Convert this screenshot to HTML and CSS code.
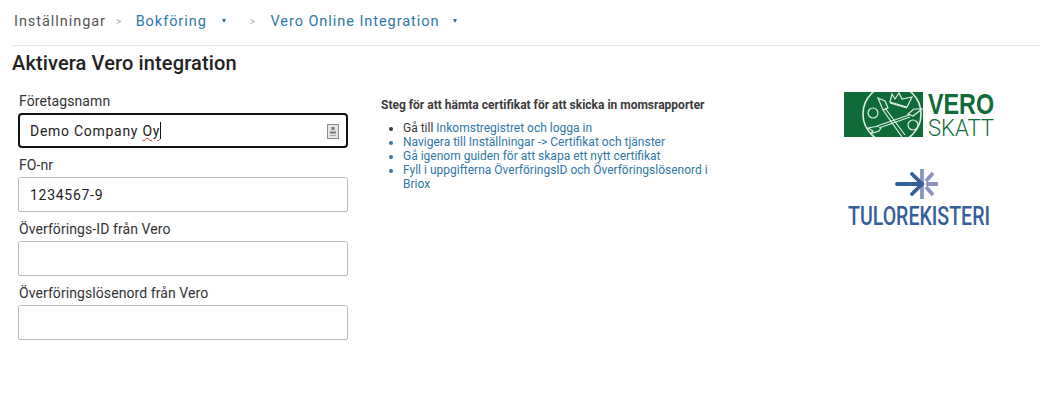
FILE: index.html
```html
<!DOCTYPE html>
<html lang="sv">
<head>
<meta charset="utf-8">
<title>Aktivera Vero integration</title>
<link rel="stylesheet" href="styles.css">
</head>
<body>
<nav class="crumbs">
  <span class="crumb-root">Inställningar</span>
  <span class="sep sep-first">&gt;</span>
  <a class="crumb-link">Bokföring</a>
  <span class="caret caret-first"></span>
  <span class="sep sep-second">&gt;</span>
  <a class="crumb-link">Vero Online Integration</a>
  <span class="caret caret-second"></span>
</nav>
<main class="content">
  <h1 class="title">Aktivera Vero integration</h1>
  <div class="columns">
    <form class="form">
      <div class="field">
        <label class="label">Företagsnamn</label>
        <div class="input input-focus">
          <span class="value">Demo Company <span class="squiggle">Oy</span></span><span class="cursor"></span>
          <svg class="autofill" width="12" height="15" viewBox="0 0 12 15"><rect x="0.5" y="0.5" width="11" height="14" fill="#e4e4e4" stroke="#8d8d8d"/><rect x="4.500" y="3" width="3" height="3" fill="#777"/><path d="M3 7.500h6v2H3z" fill="#777"/><path d="M3 11.500h6" stroke="#aaa"/></svg>
        </div>
      </div>
      <div class="field">
        <label class="label">FO-nr</label>
        <div class="input"><span class="value">1234567-9</span></div>
      </div>
      <div class="field">
        <label class="label">Överförings-ID från Vero</label>
        <div class="input"></div>
      </div>
      <div class="field">
        <label class="label">Överföringslösenord från Vero</label>
        <div class="input"></div>
      </div>
    </form>
    <section class="steps">
      <h2 class="steps-title">Steg för att hämta certifikat för att skicka in momsrapporter</h2>
      <ul class="steps-list">
        <li class="step-dark">Gå till <a class="step-link">Inkomstregistret och logga in</a></li>
        <li><a class="step-link">Navigera till Inställningar -&gt; Certifikat och tjänster</a></li>
        <li><a class="step-link">Gå igenom guiden för att skapa ett nytt certifikat</a></li>
        <li><a class="step-link">Fyll i uppgifterna ÖverföringsID och Överföringslösenord i Briox</a></li>
      </ul>
    </section>
    <aside class="logos">
      <svg class="logo-vero" width="174" height="60" viewBox="0 -8 174 60">
        <defs><clipPath id="vero-clip"><rect x="0" y="1" width="79" height="45"/></clipPath></defs>
        <rect x="0" y="1" width="79" height="45" fill="#0f6b38"/>
        <g clip-path="url(#vero-clip)" fill="none" stroke="#dfeee5" stroke-width="1.200">
          <circle cx="48" cy="23" r="29" stroke-width="1.600"/>
          <path d="M34 7l7 3 3 7-5 2zM41 17l20 27M39 19l19 27"/>
          <path d="M78 18l-8 0-6 5 5 2zM65 24L33 35M66 26L35 37"/>
          <path d="M35 35l-11 2 5 3-3 3 9-3 2-3"/>
          <circle cx="29" cy="22" r="5"/>
          <circle cx="69" cy="34" r="5"/>
          <path d="M48 3l3 5 4-6 3 6 10-2-5 10-17-5z"/>
          <path d="M46 12l17 5"/>
        </g>
        <text class="vero-big" x="84" y="23" textLength="66" lengthAdjust="spacingAndGlyphs">VERO</text>
        <text class="vero-small" x="84" y="45" textLength="66" lengthAdjust="spacingAndGlyphs">SKATT</text>
      </svg>
      <svg class="logo-tulo" width="190" height="62" viewBox="0 0 190 62">
        <g fill="none" stroke-width="3.800">
          <path d="M76 1v30M80 16h12M87 5l-7 8M87 27l-7-8" stroke="#8c95c0"/>
          <path d="M51 16h25M66 6l10 10-10 10" stroke="#34609a" stroke-linecap="round"/>
        </g>
        <text class="tulo-text" x="2" y="57" textLength="142" lengthAdjust="spacingAndGlyphs">TULOREKISTERI</text>
      </svg>
    </aside>
  </div>
</main>
</body>
</html>
```

FILE: styles.css
```css
* { box-sizing: border-box; }
html, body { margin: 0; padding: 0; }
body {
  width: 1040px;
  height: 406px;
  overflow: hidden;
  background: #fff;
  font-family: Roboto, "Liberation Sans", sans-serif;
  color: #222;
}
.crumbs {
  display: flex;
  align-items: center;
  height: 46px;
  margin-left: 12px;
  padding: 0 0 3px 2px;
  border-bottom: 1px solid #e2e2e2;
  font-size: 14.500px;
  letter-spacing: 0.95px;
}
.crumb-root { color: #555; }
.crumb-link { color: #2f78a8; }
.sep { color: #aaa; font-size: 10px; }
.sep-first { margin: 0 13.500px 0 10px; }
.sep-second { margin: 0 14.500px 0 0; }
.caret {
  width: 0;
  height: 0;
  border-left: 2.500px solid transparent;
  border-right: 2.500px solid transparent;
  border-top: 4px solid #2f6f9e;
}
.caret-first { margin: 0 24px 0 15px; }
.caret-second { margin-left: 14px; }
.content { padding-left: 12px; }
.title {
  margin: 5px 0 0;
  font-size: 20px;
  line-height: 24px;
  font-weight: 500;
  letter-spacing: 0.13px;
  color: #222;
}
.columns { display: flex; align-items: flex-start; }
.form { width: 336px; margin-top: 16px; padding-left: 6px; }
.field { margin-bottom: 7px; }
.label {
  display: block;
  height: 22px;
  padding-left: 1px;
  font-size: 14px;
  line-height: 20px;
  letter-spacing: 0.08px;
  color: #333;
}
.input {
  display: flex;
  align-items: center;
  width: 330px;
  height: 35px;
  padding-left: 11px;
  border: 1px solid #bdbdbd;
  border-radius: 2px;
  font-size: 14px;
  letter-spacing: 0.72px;
  color: #222;
}
.input-focus {
  position: relative;
  border: 2px solid #111;
  border-radius: 4px;
  padding-left: 10px;
}
.squiggle {
  text-decoration: underline wavy #d22;
  text-decoration-thickness: 1px;
  text-underline-offset: 1px;
}
.cursor { width: 1px; height: 17px; background: #111; }
.autofill { position: absolute; right: 7px; top: 9px; }
.steps { width: 334px; margin: 23px 0 0 33px; color: #3a3a3a; }
.steps-title {
  margin: 0;
  font-size: 12px;
  line-height: 14px;
  font-weight: 700;
  color: #3a3a3a;
}
.steps-list {
  margin: 9px 0 0;
  padding-left: 22px;
  font-size: 12px;
  line-height: 14px;
  color: #2f78a8;
}
.step-dark { color: #3a3a3a; }
.step-link { color: #2f78a8; }
.logos {
  display: flex;
  flex-direction: column;
  align-items: flex-start;
  margin: 8px 0 0 129px;
}
.logo-vero { display: block; }
.logo-tulo { display: block; margin: 25px 0 0 2px; }
.vero-big {
  font-family: "Liberation Sans", sans-serif;
  font-size: 30px;
  font-weight: 700;
  fill: #0f6b38;
}
.vero-small {
  font-family: Roboto, sans-serif;
  font-size: 23px;
  font-weight: 300;
  fill: #0f6b38;
}
.tulo-text {
  font-family: Roboto, sans-serif;
  font-size: 25px;
  font-weight: 500;
  fill: #34609a;
}
```
